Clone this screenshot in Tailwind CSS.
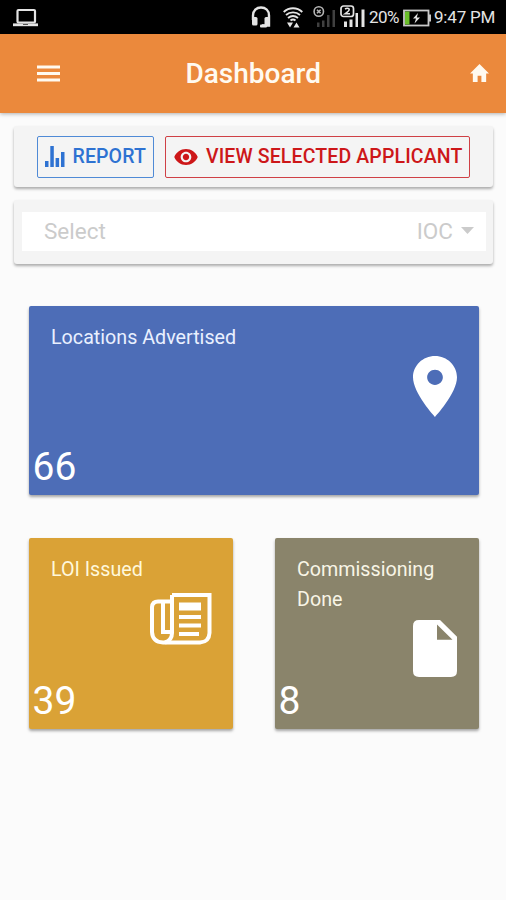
<!DOCTYPE html>
<html lang="en">
<head>
    <meta charset="UTF-8">
    <meta name="viewport" content="width=device-width, initial-scale=1.0">
    <title>Dashboard</title>
    <script src="https://cdn.jsdelivr.net/npm/@tailwindcss/browser@4"></script>
</head>
<body class="bg-[#fbfbfb] font-['Roboto',sans-serif] h-[900px] overflow-hidden">

    <!-- Status bar -->
    <div class="flex items-center h-[34px] bg-black text-[#e4e4e4] pl-[13px] pr-[10px]">
        <svg class="w-[25px] h-[20px] mt-[1px]" viewBox="0 0 25 20" fill="none" stroke="currentColor">
            <rect x="4.5" y="2" width="17.5" height="12.5" rx="1" stroke-width="2.2"/>
            <path d="M0 16.8H25" stroke-width="2.8"/>
            <path d="M10 16.5H15" stroke="#555" stroke-width="1"/>
        </svg>
        <svg class="w-[20px] h-[24px] ml-auto" viewBox="0 0 20 24">
            <path d="M2 15V10.500C2 5.500 5.500 2.500 10 2.500S18 5.500 18 10.500V20.500H11" fill="none" stroke="currentColor" stroke-width="2.400"/>
            <rect x="1" y="12" width="5.500" height="8.500" rx="1.500" fill="currentColor"/>
            <rect x="13.500" y="12" width="5.500" height="8.500" rx="1.500" fill="currentColor"/>
            <rect x="9" y="19.500" width="7" height="3" rx="1" fill="currentColor"/>
        </svg>
        <svg class="w-[20px] h-[22px] ml-[12px] mt-[2px]" viewBox="0 0 20 22">
            <g fill="none" stroke="currentColor" stroke-width="1.900">
                <path d="M.7 5C6 0 14 0 19.300 5"/>
                <path d="M3 8C7 4.500 13 4.500 17 8"/>
                <path d="M5 11C8 8.500 12 8.500 15 11"/>
                <path d="M7.500 13.500C9 12.300 11 12.300 12.500 13.500"/>
            </g>
            <path d="M4 15.500H10L7 20.500ZM10.500 20.500H16.500L13.500 15.500Z" fill="currentColor"/>
        </svg>
        <svg class="w-[23px] h-[24px] ml-[10px]" viewBox="0 0 23 24">
            <path d="M4 17.500H6.500V22H4ZM9 15.500H11.500V22H9ZM14 10H16.500V22H14ZM19.500 5H22V22H19.500Z" fill="#404040"/>
            <circle cx="5.800" cy="6.500" r="4.700" fill="#000" stroke="#b5b5b5" stroke-width="1.600"/>
            <path d="M4 4.700L7.600 8.300M7.600 4.700L4 8.300" stroke="#b5b5b5" stroke-width="1.600"/>
        </svg>
        <svg class="w-[26px] h-[24px] ml-[4px]" viewBox="0 0 26 24">
            <path d="M4 16.500H7V22H4ZM9.500 14.500H12.500V22H9.500ZM15.500 8H18V22H15.500ZM21.500 4.500H24.500V22H21.500Z" fill="currentColor"/>
            <rect x="1" y="1" width="12.500" height="10.500" rx="2.500" fill="#000" stroke="currentColor" stroke-width="1.700"/>
            <path d="M5 4Q7.500 2.500 9.200 4Q9.800 5.500 5 8.800H10" fill="none" stroke="currentColor" stroke-width="1.500"/>
        </svg>
        <span class="w-[31px] ml-[3px] text-[17px] tracking-[-0.500px] whitespace-nowrap pt-[2px]">20%</span>
        <svg class="w-[28px] h-[18px] ml-[3px] mt-[2px]" viewBox="0 0 28 18">
            <rect x="1" y="1.500" width="24.500" height="15" fill="none" stroke="#c9c9c9" stroke-width="1.800"/>
            <path d="M26 5.500H28V12.500H26Z" fill="#c9c9c9"/>
            <path d="M2 2.500H6.500V15.500H2Z" fill="#6bbf2a"/>
            <path d="M15 4L10 9.500H13L11.500 14.500L17 8.500H13.800Z" fill="currentColor"/>
        </svg>
        <span class="w-[62px] ml-[3px] text-[17px] tracking-[-0.200px] whitespace-nowrap pt-[2px]">9:47 PM</span>
    </div>

    <!-- Header -->
    <header class="relative flex items-center h-[79px] bg-[#eb893c] text-[#fffaf0] pl-[37px] pr-[17px] shadow-[0_1px_4px_rgba(0,0,0,0.3)]">
        <svg class="w-[23px] h-[17px]" viewBox="0 0 23 17" fill="currentColor">
            <path d="M0 .5H23V3.400H0ZM0 7H23V9.900H0ZM0 13.500H23V16.400H0Z"/>
        </svg>
        <h1 class="text-[28px] font-medium leading-none ml-[125.500px]">Dashboard</h1>
        <svg class="w-[19px] h-[18px] ml-auto -mt-[2px]" viewBox="2 3 20 17" preserveAspectRatio="none" fill="currentColor">
            <path d="M10 20V14H14V20H19V12H22L12 3L2 12H5V20Z"/>
        </svg>
    </header>

    <!-- Actions -->
    <div class="flex h-[61px] mt-[13px] ml-[14px] mr-[13px] pt-[10px] pl-[23px] gap-[11px] rounded-[3px] bg-[#f4f4f4] shadow-[0_2px_3px_rgba(0,0,0,0.32)] text-[19.500px] tracking-[0.130px] font-medium leading-none whitespace-nowrap">
        <button class="flex items-center w-[117px] h-[42px] pl-[7px] pb-px border border-[#4f8ad6] rounded-[2px] text-[#2e72d2]">
            <svg class="w-[20px] h-[21px] mr-[7.500px]" viewBox="0 0 20 21" fill="currentColor">
                <path d="M0 15H3.500V21H0ZM5.300 0H8.800V21H5.300ZM10.600 12H14.100V21H10.600ZM16 6H19.500V21H16Z"/>
            </svg>
            REPORT
        </button>
        <button class="flex items-center w-[305px] h-[42px] pl-[8px] pb-px border border-[#cf4045] rounded-[2px] text-[#cd1719]">
            <svg class="w-[24px] h-[16px] mr-[8px]" viewBox="1 4.500 22 15" fill="currentColor">
                <path d="M12 4.500C7 4.500 2.730 7.610 1 12c1.730 4.390 6 7.500 11 7.500s9.270-3.110 11-7.500c-1.730-4.390-6-7.500-11-7.500zM12 17c-2.760 0-5-2.240-5-5s2.240-5 5-5 5 2.240 5 5-2.240 5-5 5zm0-8c-1.660 0-3 1.340-3 3s1.340 3 3 3 3-1.340 3-3-1.340-3-3-3z"/>
            </svg>
            VIEW SELECTED APPLICANT
        </button>
    </div>

    <!-- Select -->
    <div class="h-[64px] mt-[13px] ml-[14px] mr-[13px] pt-[12px] pl-[8px] pr-[7px] rounded-[3px] bg-[#f4f4f4] shadow-[0_2px_3px_rgba(0,0,0,0.32)]">
        <div class="flex items-center justify-between h-[39px] bg-white pl-[22px] pr-[12px] text-[22.500px] text-[#cbcbcb]">
            <span>Select</span>
            <span class="flex items-center gap-[8px]">
                IOC
                <svg class="w-[13px] h-[7px] -mt-[2px]" viewBox="0 0 13 7" fill="currentColor"><path d="M0 0H13L6.500 7Z"/></svg>
            </span>
        </div>
    </div>

    <!-- Tiles -->
    <main class="grid grid-cols-2 gap-x-[42px] gap-y-[43px] mt-[42px] ml-[28.500px] mr-[27.500px] text-white text-[19.700px] leading-[30px]">
        <section class="col-span-2 flex flex-col h-[189px] rounded-[2px] bg-[#4d6db7] shadow-[0_2px_3px_rgba(0,0,0,0.35)]">
            <h2 class="pt-[17px] pl-[22.500px] text-[#e9f0ff]">Locations Advertised</h2>
            <svg class="w-[44px] h-[61px] mt-[3px] mr-[22px] self-end shrink-0" viewBox="5 2 14 20" preserveAspectRatio="none" fill="currentColor">
                <path d="M12 2C8.130 2 5 5.130 5 9c0 5.250 7 13 7 13s7-7.750 7-13c0-3.870-3.130-7-7-7zm0 9.500c-1.380 0-2.500-1.120-2.500-2.500s1.120-2.500 2.500-2.500 2.500 1.120 2.500 2.500-1.120 2.500-2.500 2.500z"/>
            </svg>
            <p class="mt-auto pl-[4px] pb-[8px] text-[39px] leading-[40px]">66</p>
        </section>

        <section class="flex flex-col h-[191px] rounded-[2px] bg-[#daa236] shadow-[0_2px_3px_rgba(0,0,0,0.35)]">
            <h2 class="pt-[17px] pl-[22.500px] text-[#fff8dc]">LOI Issued</h2>
            <svg class="w-[62px] h-[52px] mt-[8px] mr-[21px] self-end shrink-0" viewBox="0 0 62 52" fill="none" stroke="currentColor" stroke-width="4">
                <path d="M22 2H59.500V40Q59 49 50 49.500H13Q2.500 49 2 39V14Q2.500 8.500 8 8.500H22"/>
                <path d="M22 2V40Q22 47 15 49.500"/>
                <path d="M13 9V39H22"/>
                <path d="M29 13.500H51" stroke-width="8"/>
                <path d="M29 24H51M29 32.500H51M29 41H49"/>
            </svg>
            <p class="mt-auto pl-[4px] pb-[8px] text-[39px] leading-[40px]">39</p>
        </section>

        <section class="flex flex-col h-[191px] rounded-[2px] bg-[#8a846b] shadow-[0_2px_3px_rgba(0,0,0,0.35)]">
            <h2 class="pt-[17px] pl-[22.500px] text-[#f8f5e6]">Commissioning<br>Done</h2>
            <svg class="w-[44px] h-[57px] mt-[5px] mr-[22px] self-end shrink-0" viewBox="0 0 44 58" preserveAspectRatio="none" fill="currentColor">
                <path fill-rule="evenodd" d="M6 0H27L44 17V52Q44 58 38 58H6Q0 58 0 52V6Q0 0 6 0ZM24 4.500V20H39.500Z"/>
            </svg>
            <p class="mt-auto pl-[4px] pb-[8px] text-[39px] leading-[40px]">8</p>
        </section>
    </main>

</body>
</html>
